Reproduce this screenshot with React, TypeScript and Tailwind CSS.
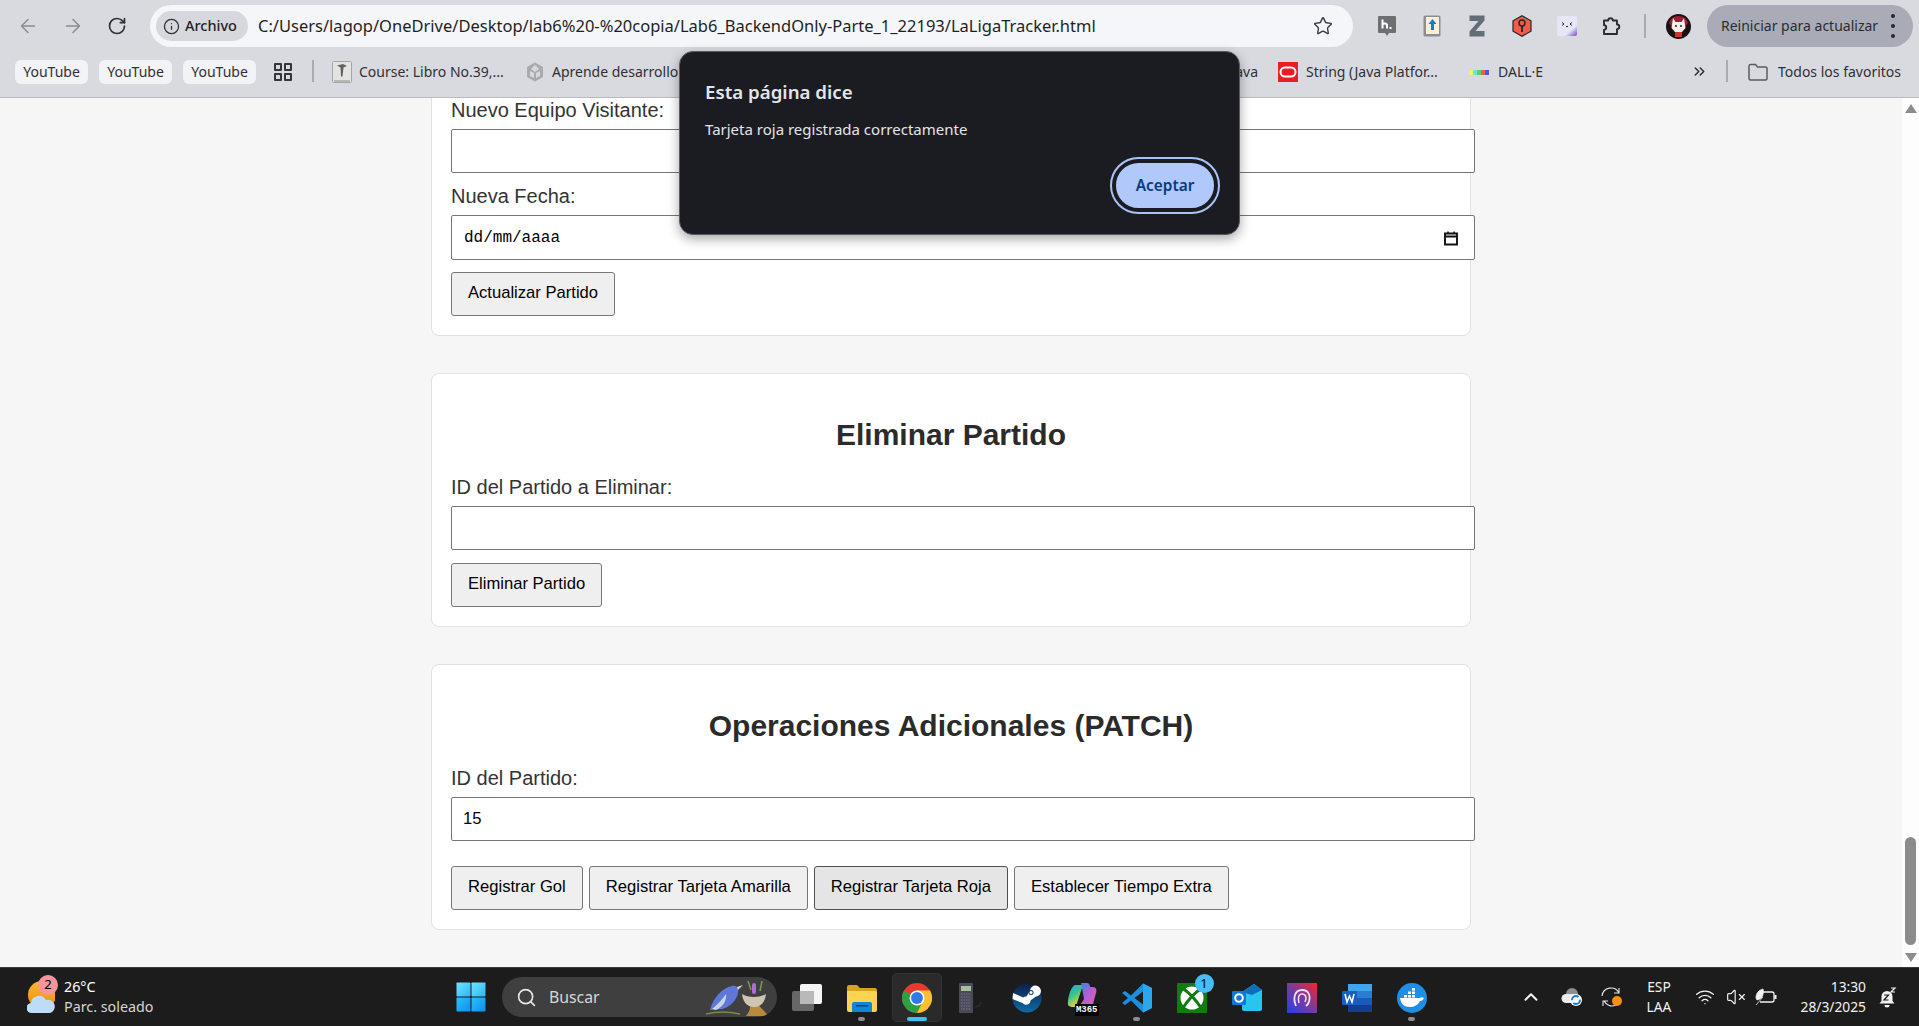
import { ArrowLeft, ArrowRight, RotateCw, Info, Star, ChevronsRight, Search, ChevronUp, VolumeX, Wifi } from "lucide-react";

const URL_TEXT = "C:/Users/lagop/OneDrive/Desktop/lab6%20-%20copia/Lab6_BackendOnly-Parte_1_22193/LaLigaTracker.html";

function Square() {
  return <div className="w-[8px] h-[8px] border-2 border-[#34353a] rounded-[1px]" />;
}

function ExtH() {
  return (
    <svg width="20" height="22" viewBox="0 0 20 22">
      <path d="M2 1h16a1 1 0 0 1 1 1v15a1 1 0 0 1-1 1h-6l-2 3-2-3H2a1 1 0 0 1-1-1V2a1 1 0 0 1 1-1z" fill="#6e6f73" />
      <path d="M5.500 4.500v9M5.500 9.500c1-1.500 4.500-1.500 4.500 1v3" stroke="#fff" strokeWidth="2" fill="none" />
      <rect x="12.500" y="12" width="2" height="2" fill="#fff" />
    </svg>
  );
}

function ExtBook() {
  return (
    <svg width="18" height="22" viewBox="0 0 18 22">
      <rect x="0.500" y="0.500" width="17" height="21" rx="1.500" fill="#8a8d92" />
      <rect x="3" y="2" width="13" height="17" fill="#f7efd9" />
      <path d="M1.500 3h1M1.500 6h1M1.500 9h1M1.500 12h1M1.500 15h1" stroke="#c08a70" strokeWidth="1" />
      <path d="M9.500 4l4 5h-2.500v6h-3v-6H5.500z" fill="#1679c9" />
    </svg>
  );
}

function ExtZ() {
  return (
    <svg width="16" height="22" viewBox="0 0 16 22">
      <path d="M0.500 0.500h15v5L6.500 16h9v5.500H0.500v-5L9.500 6h-9z" fill="#626d78" />
    </svg>
  );
}

function ExtHex() {
  return (
    <svg width="20" height="22" viewBox="0 0 20 22">
      <path d="M10 0.800L19 5.800v10.400L10 21.200 1 16.200V5.800z" fill="#f25a4b" stroke="#26262a" strokeWidth="1.200" />
      <circle cx="10" cy="8" r="3" fill="none" stroke="#26262a" strokeWidth="1.500" />
      <path d="M10 11v6" stroke="#26262a" strokeWidth="1.800" />
    </svg>
  );
}

function ExtFace() {
  return (
    <svg width="20" height="20" viewBox="0 0 20 20">
      <defs>
        <linearGradient id="faceBg" x1="0.300" y1="0.200" x2="1" y2="1">
          <stop offset="0.600" stopColor="#e5e7f7" />
          <stop offset="1" stopColor="#7a3fd0" />
        </linearGradient>
      </defs>
      <rect width="20" height="20" rx="2" fill="url(#faceBg)" />
      <path d="M5 6.500l2 1.500-2 1.500M15 6.500l-2 1.500 2 1.500" stroke="#2d2d3a" strokeWidth="1" fill="none" />
      <path d="M9 10.500h2" stroke="#2d2d3a" strokeWidth="1" />
    </svg>
  );
}

function PuzzleIcon() {
  return (
    <svg width="20" height="20" viewBox="0 0 20 20">
      <path d="M2 4.500h4.200a2.300 2.300 0 0 1 4.600 0H15v4a2.300 2.300 0 0 1 0 4.600V18H2v-4.300a2.200 2.200 0 0 0 0-4.400z" fill="none" stroke="#2b2c30" strokeWidth="1.900" strokeLinejoin="round" />
    </svg>
  );
}

function Avatar() {
  return (
    <svg width="25" height="25" viewBox="0 0 25 25">
      <circle cx="12.500" cy="12.500" r="12.500" fill="#1c1014" />
      <path d="M3 9a10 10 0 0 1 19 0l-3 4H6z" fill="#a01c30" />
      <path d="M7 4l2.500 4h6L18 4l1.500 10-3.500 4H9l-3.500-4z" fill="#f6eeec" />
      <circle cx="10" cy="12" r="1" fill="#222" />
      <circle cx="15" cy="12" r="1" fill="#222" />
      <rect x="9" y="18" width="7" height="5" fill="#d3322c" />
    </svg>
  );
}

function OracleIcon() {
  return (
    <svg width="20" height="20" viewBox="0 0 20 20">
      <rect width="20" height="20" fill="#ec1c24" />
      <rect x="2.500" y="5.500" width="15" height="9" rx="4.500" fill="none" stroke="#fff" strokeWidth="2" />
    </svg>
  );
}

function DalleIcon() {
  return (
    <div className="flex w-[20px] h-[5px]">
      <div className="flex-1 bg-[#f6f06a]" />
      <div className="flex-1 bg-[#6fe3e0]" />
      <div className="flex-1 bg-[#66cc66]" />
      <div className="flex-1 bg-[#e26060]" />
      <div className="flex-1 bg-[#4f56d8]" />
    </div>
  );
}

function CourseIcon() {
  return (
    <svg width="20" height="22" viewBox="0 0 20 22">
      <rect x="0.500" y="0.500" width="19" height="21" rx="1" fill="#e4e4e2" stroke="#a5a5a5" />
      <path d="M5 4.500l6-1.500 4 2-3.500 1.500-1 9h-1.500l-.5-9z" fill="#66615b" />
      <path d="M2 20h16" stroke="#8b8b88" strokeWidth="1" />
    </svg>
  );
}

function UnityIcon() {
  return (
    <svg width="20" height="20" viewBox="0 0 20 20">
      <path d="M10 0.500l8 4.500v10l-8 4.500-8-4.500V5z" fill="#a9aaae" />
      <path d="M10 3l-4 4 4 3 4-3zM5 9v5l4 2v-5zM15 9v5l-4 2v-5z" fill="#d8d9df" />
    </svg>
  );
}

function WindowsLogo() {
  return (
    <svg width="30" height="30" viewBox="0 0 30 30">
      <defs>
        <linearGradient id="winTop" x1="0" y1="0" x2="1" y2="1">
          <stop offset="0" stopColor="#6fe6ff" />
          <stop offset="1" stopColor="#2cb5f2" />
        </linearGradient>
        <linearGradient id="winBottom" x1="0" y1="0" x2="1" y2="1">
          <stop offset="0" stopColor="#2cc0f5" />
          <stop offset="1" stopColor="#0f8ef0" />
        </linearGradient>
      </defs>
      <rect x="0.500" y="0.500" width="14" height="14" rx="0.800" fill="url(#winTop)" />
      <rect x="15.500" y="0.500" width="14" height="14" rx="0.800" fill="url(#winTop)" />
      <rect x="0.500" y="15.500" width="14" height="14" rx="0.800" fill="url(#winBottom)" />
      <rect x="15.500" y="15.500" width="14" height="14" rx="0.800" fill="url(#winBottom)" />
    </svg>
  );
}

function WeatherIcon() {
  return (
    <svg width="28" height="34" viewBox="0 0 28 34">
      <defs>
        <linearGradient id="sunFill" x1="0" y1="0" x2="0" y2="1">
          <stop offset="0" stopColor="#f9b92c" />
          <stop offset="1" stopColor="#ea8a1c" />
        </linearGradient>
      </defs>
      <circle cx="15" cy="15" r="14" fill="url(#sunFill)" />
      <path d="M5 33a5 5 0 0 1-1-10 8 8 0 0 1 15-3 6.500 6.500 0 0 1 4 13z" fill="#bcdcf7" />
    </svg>
  );
}

function BirdArt() {
  return (
    <svg width="66" height="38" viewBox="0 0 66 38">
      <path d="M42 38c4-5 5-8 3-14h8c3 6 8 9 11 14z" fill="#b98a3c" />
      <path d="M38 16c6 4 18 4 24 0-1 9-6 13-12 13s-11-4-12-13z" fill="#cfc6b2" />
      <rect x="48" y="5" width="4" height="11" rx="2" fill="#b36ad8" />
      <path d="M44 3l3 9M58 3l-2 10" stroke="#7b9a4a" strokeWidth="1.500" />
      <path d="M6 32c3-12 12-22 22-24 5-1 7 3 6 7-1 7-9 15-16 16z" fill="#5f78d8" />
      <path d="M8 31c5-4 10-9 14-15 1 6-3 13-10 16z" fill="#c6d4ee" />
      <path d="M33 9l6-2-5 5z" fill="#d9d9d9" />
      <path d="M2 36c8-2 20-3 34 0" stroke="#7b8a4a" strokeWidth="1.500" fill="none" />
    </svg>
  );
}

function TaskView() {
  return (
    <svg width="30" height="28" viewBox="0 0 30 28">
      <rect x="8" y="0" width="22" height="20" rx="2" fill="#f5f5f5" />
      <rect x="0" y="7" width="22" height="20" rx="2" fill="#707070" opacity="0.9" />
      <rect x="8" y="7" width="14" height="13" fill="#b9b9b9" />
    </svg>
  );
}

function FolderIcon() {
  return (
    <svg width="30" height="27" viewBox="0 0 30 27">
      <path d="M0 2a2 2 0 0 1 2-2h8l3 3h15a2 2 0 0 1 2 2v3H0z" fill="#d9a21d" />
      <path d="M0 6h28a2 2 0 0 1 2 2v17a2 2 0 0 1-2 2H2a2 2 0 0 1-2-2z" fill="#fbd452" />
      <path d="M5 27v-8a2 2 0 0 1 2-2h16a2 2 0 0 1 2 2v8z" fill="#0f86d6" />
      <rect x="9" y="20" width="12" height="1.500" fill="#063f73" />
    </svg>
  );
}

function ChromeLogo() {
  return (
    <svg width="30" height="30" viewBox="0 0 48 48">
      <circle cx="24" cy="24" r="24" fill="#e33b2e" />
      <path d="M24 24L3.200 12A24 24 0 0 0 24 48l12-24z" fill="#2f9e44" />
      <path d="M24 12h20.800A24 24 0 0 1 24 48l12-24z" fill="#fbc02d" />
      <circle cx="24" cy="24" r="12" fill="#fff" />
      <circle cx="24" cy="24" r="9.500" fill="#2f78e8" />
    </svg>
  );
}

function Calculator() {
  return (
    <svg width="30" height="30" viewBox="0 0 30 30">
      <rect x="2" y="0" width="14" height="30" rx="1" fill="#4b4a59" />
      <rect x="4" y="3" width="10" height="5" fill="#a9bd9c" />
      <path d="M4 11h10M4 14h10M4 17h10M4 20h10M4 23h10M4 26h10" stroke="#77768a" strokeWidth="1.200" strokeDasharray="1.500 1" />
      <path d="M18 24c3 0 5-2 6-5" stroke="#2c2c2c" strokeWidth="1.500" fill="none" />
    </svg>
  );
}

function SteamLogo() {
  return (
    <svg width="30" height="30" viewBox="0 0 30 30">
      <defs>
        <linearGradient id="steamBg" x1="0" y1="0" x2="0" y2="1">
          <stop offset="0" stopColor="#0e1f47" />
          <stop offset="1" stopColor="#0f6aa8" />
        </linearGradient>
      </defs>
      <circle cx="15" cy="15" r="14.500" fill="url(#steamBg)" />
      <path d="M0.500 16l10 4a4.500 4.500 0 0 0 8-2.500l5.500-4a5.500 5.500 0 1 0-6-6l-3.500 6a4.500 4.500 0 0 0-3.500 1L1 10z" fill="#fff" />
      <circle cx="19" cy="9.500" r="2.500" fill="#1a3a6b" />
      <circle cx="19" cy="9.500" r="1.500" fill="#fff" />
    </svg>
  );
}

function CopilotIcon() {
  return (
    <div className="relative w-[30px] h-[32px]">
      <svg width="30" height="28" viewBox="0 0 30 28">
        <defs>
          <linearGradient id="copLeft" x1="0" y1="0" x2="0.500" y2="1">
            <stop offset="0" stopColor="#2f9fe8" />
            <stop offset="0.500" stopColor="#37c48b" />
            <stop offset="1" stopColor="#f4d430" />
          </linearGradient>
          <linearGradient id="copRight" x1="0" y1="0" x2="1" y2="1">
            <stop offset="0" stopColor="#1f8be0" />
            <stop offset="0.500" stopColor="#b45fd8" />
            <stop offset="1" stopColor="#ef5aa0" />
          </linearGradient>
        </defs>
        <path d="M8 3h8L9 24c-1 2-7 1-8-1-1-6 3-19 7-20z" fill="url(#copLeft)" />
        <path d="M14 1h6c2 0 3 2 3 4h3c3 0 4 3 3 6l-3 11c-1 2-3 3-5 3h-9l5-8-3-16z" fill="url(#copRight)" />
      </svg>
      <span className="absolute right-[-2px] bottom-[-2px] bg-black text-white text-[9px] leading-[12px] font-bold px-[1px] font-['Liberation_Mono',monospace]">M365</span>
    </div>
  );
}

function VsCode() {
  return (
    <svg width="30" height="30" viewBox="0 0 30 30">
      <path d="M21 0.500L30 5v20l-9 4.500-12-12-6 4.500-3-2 6-5-6-5 3-2 6 4.500z" fill="#1b8fdc" />
      <path d="M21 0.500L30 5v20l-9 4.500z" fill="#2ba7ee" />
      <path d="M21 8.500v13L12.500 15z" fill="#1c1c1c" />
    </svg>
  );
}

function XboxIcon() {
  return (
    <svg width="30" height="30" viewBox="0 0 30 30">
      <rect width="30" height="30" rx="1" fill="#107c10" />
      <circle cx="15" cy="15" r="11.500" fill="#fff" />
      <path d="M6 5.500C11 9 19 17 24.500 25.500M24 5.500C19 9 11 17 5.500 25.500" fill="none" stroke="#107c10" strokeWidth="3" />
    </svg>
  );
}

function OutlookIcon() {
  return (
    <svg width="30" height="28" viewBox="0 0 30 28">
      <path d="M10 8l12-8 8 6v19a2 2 0 0 1-2 2H12a2 2 0 0 1-2-2z" fill="#29c4ef" />
      <path d="M10 8l12-8 8 6-10 5z" fill="#0f6dbb" />
      <rect x="0" y="7" width="14" height="14" rx="1" fill="#0f78d4" />
      <circle cx="7" cy="14" r="3.800" fill="none" stroke="#fff" strokeWidth="2" />
    </svg>
  );
}

function PurpleApp() {
  return (
    <svg width="30" height="30" viewBox="0 0 30 30">
      <defs>
        <linearGradient id="purpleBg" x1="0" y1="1" x2="1" y2="0">
          <stop offset="0" stopColor="#1f40f0" />
          <stop offset="0.500" stopColor="#7a3b9c" />
          <stop offset="1" stopColor="#f8242c" />
        </linearGradient>
      </defs>
      <rect width="30" height="30" fill="url(#purpleBg)" />
      <path d="M9 23c-3-7-2-16 6-16s9 8 6 14l-2 2" fill="none" stroke="#f0e2f2" strokeWidth="1.800" />
      <path d="M12 20c-1-4-1-9 3-9s5 4 3 8" fill="none" stroke="#f0e2f2" strokeWidth="1.500" />
    </svg>
  );
}

function WordIcon() {
  return (
    <svg width="30" height="28" viewBox="0 0 30 28">
      <rect x="6" y="0" width="24" height="7" fill="#41a5ee" />
      <rect x="6" y="7" width="24" height="7" fill="#2b7cd3" />
      <rect x="6" y="14" width="24" height="7" fill="#185abd" />
      <rect x="6" y="21" width="24" height="7" fill="#103f91" />
      <rect x="0" y="7" width="15" height="14" rx="1" fill="#1a5fc0" />
      <path d="M3 10l2 8 2.500-6 2.500 6 2-8" fill="none" stroke="#fff" strokeWidth="1.500" />
    </svg>
  );
}

function DockerIcon() {
  return (
    <svg width="30" height="30" viewBox="0 0 30 30">
      <circle cx="15" cy="15" r="15" fill="#1d8fe6" />
      <path d="M3 15h20c1-1 2-1 4 0-1 2-2 3-4 3-2 4-6 6-10 6-6 0-9-3-10-9z" fill="#fff" />
      <path d="M7 12h3v2.500H7zM11 12h3v2.500h-3zM15 12h3v2.500h-3zM11 8.500h3V11h-3zM15 8.500h3V11h-3zM15 5h3v2.500h-3z" fill="#fff" />
    </svg>
  );
}

function CloudSync() {
  return (
    <svg width="22" height="20" viewBox="0 0 22 20">
      <circle cx="11" cy="7" r="6" fill="#8e8e8e" />
      <path d="M5 16a4.500 4.500 0 0 1 0-9h9v9z" fill="#ececec" />
      <circle cx="15" cy="13" r="6" fill="#fff" />
      <circle cx="15" cy="13" r="4" fill="none" stroke="#1b7fd0" strokeWidth="2" strokeDasharray="9 3" />
    </svg>
  );
}

function SyncDot() {
  return (
    <svg width="22" height="22" viewBox="0 0 22 22">
      <path d="M1 10a9 9 0 0 1 17-3M18 2v5h-5M15 19a9 9 0 0 1-12-4M2 20v-5h5" fill="none" stroke="#e6e6e6" strokeWidth="1.100" />
      <circle cx="16" cy="15" r="5" fill="#f7910f" />
    </svg>
  );
}

function BatteryLeaf() {
  return (
    <svg width="22" height="18" viewBox="0 0 22 18">
      <path d="M7 4h10a2 2 0 0 1 2 2v6a2 2 0 0 1-2 2H5" fill="none" stroke="#f2f2f2" strokeWidth="1.300" />
      <rect x="19.500" y="7" width="2" height="4" fill="#f2f2f2" />
      <path d="M1 17L8 9M1 10c0-5 3-8 7-9 1 4 0 10-6 11z" fill="#f2f2f2" stroke="#f2f2f2" strokeWidth="0.800" />
    </svg>
  );
}

function BellSnooze() {
  return (
    <svg width="18" height="21" viewBox="0 0 18 21">
      <path d="M8 4a5.500 5.500 0 0 1 5.500 5.500V14l2 2.500H0.500l2-2.500V9.500A5.500 5.500 0 0 1 8 4z" fill="#f2f2f2" />
      <path d="M5.500 18h5a2.500 2.500 0 0 1-5 0z" fill="#f2f2f2" />
      <path d="M5 8h4.500L5 13h4.500" fill="none" stroke="#1c1c1c" strokeWidth="1.200" />
      <path d="M12 1h4l-4 4h4" fill="none" stroke="#f2f2f2" strokeWidth="1.200" />
    </svg>
  );
}

function ExtSlot({ children }: { children: React.ReactNode }) {
  return <div className="w-[45px] h-[42px] flex items-center justify-center shrink-0">{children}</div>;
}

function BrowserChrome() {
  return (
    <div className="shrink-0 bg-[#d9dae0] border-b border-[#b9babd] text-[#2f3034]">
      {/* Toolbar */}
      <div className="h-[52px] flex items-start pt-[5px]">
        <div className="w-[150px] h-[42px] flex items-center shrink-0 pl-[17px] gap-[23px]">
          <ArrowLeft className="w-[22px] h-[22px] text-[#8a8b90]" strokeWidth={1.6} />
          <ArrowRight className="w-[22px] h-[22px] text-[#8a8b90]" strokeWidth={1.6} />
          <RotateCw className="w-[20px] h-[20px] text-[#2f3034]" strokeWidth={2} />
        </div>
        <div className="w-[1203px] h-[42px] rounded-full bg-[#f4f6fa] flex items-center pl-[6px] pr-[20px] shrink-0">
          <div className="h-[30px] w-[92px] rounded-full bg-[#d6d8de] flex items-center pl-[7px] gap-[5px] shrink-0">
            <Info className="w-[17px] h-[17px]" strokeWidth={1.8} />
            <span className="text-[14.500px] font-medium text-[#1f1f22]">Archivo</span>
          </div>
          <span className="ml-[10px] pt-[1px] text-[16.500px] text-[#1f1f22] whitespace-nowrap">{URL_TEXT}</span>
          <Star className="w-[20px] h-[20px] ml-auto text-[#3b3c40]" strokeWidth={1.7} />
        </div>
        <div className="ml-[11px] flex items-center h-[42px]">
          <ExtSlot><ExtH /></ExtSlot>
          <ExtSlot><ExtBook /></ExtSlot>
          <ExtSlot><ExtZ /></ExtSlot>
          <ExtSlot><ExtHex /></ExtSlot>
          <ExtSlot><ExtFace /></ExtSlot>
          <ExtSlot><PuzzleIcon /></ExtSlot>
          <div className="w-[2px] h-[24px] bg-[#a9abb2] mx-[10px]" />
          <ExtSlot><Avatar /></ExtSlot>
        </div>
        <div className="ml-[6px] w-[206px] h-[42px] rounded-full bg-[#a9acb6] flex items-center pl-[14px] shrink-0">
          <span className="text-[14px] pb-[1px] text-[#2b2c30] whitespace-nowrap">Reiniciar para actualizar</span>
          <div className="ml-[13px] flex flex-col gap-[6px]">
            <div className="w-[4px] h-[4px] rounded-full bg-[#26272b]" />
            <div className="w-[4px] h-[4px] rounded-full bg-[#26272b]" />
            <div className="w-[4px] h-[4px] rounded-full bg-[#26272b]" />
          </div>
        </div>
      </div>
      {/* Bookmarks */}
      <div className="h-[45px] flex items-start pt-[8px] pl-[15px] text-[14px] whitespace-nowrap">
        <div className="flex gap-[11px]">
          <div className="w-[73px] h-[24px] pb-[2px] rounded-[6px] bg-[#f2f3f6] flex items-center justify-center">YouTube</div>
          <div className="w-[73px] h-[24px] pb-[2px] rounded-[6px] bg-[#f2f3f6] flex items-center justify-center">YouTube</div>
          <div className="w-[73px] h-[24px] pb-[2px] rounded-[6px] bg-[#f2f3f6] flex items-center justify-center">YouTube</div>
        </div>
        <div className="ml-[18px] h-[24px] w-[18px] grid grid-cols-2 gap-[2px] content-center">
          <Square />
          <Square />
          <Square />
          <Square />
        </div>
        <div className="ml-[20px] w-[2px] h-[22px] bg-[#a9abb2]" />
        <div className="ml-[18px] h-[24px] flex items-center gap-[7px] w-[190px]">
          <CourseIcon />
          <span className="pb-[2px]">Course: Libro No.39,...</span>
        </div>
        <div className="h-[24px] flex items-center gap-[7px] ml-[3px]">
          <UnityIcon />
          <span className="w-[160px] pb-[2px]">Aprende desarrollo</span>
        </div>
        <div className="h-[24px] flex items-center justify-end w-[546px]">
          <span className="pb-[2px]">Java</span>
        </div>
        <div className="ml-[20px] h-[24px] flex items-center gap-[8px] w-[191px]">
          <OracleIcon />
          <span className="pb-[2px]">String (Java Platfor...</span>
        </div>
        <div className="h-[24px] flex items-center gap-[9px] w-[190px]">
          <DalleIcon />
          <span className="pb-[2px]">DALL·E</span>
        </div>
        <ChevronsRight className="w-[17px] h-[17px] mt-[3px] ml-[32px] text-[#2f3034]" strokeWidth={2.2} />
        <div className="ml-[18px] w-[2px] h-[22px] bg-[#a9abb2]" />
        <svg className="ml-[20px] mt-[3px]" width="20" height="18" viewBox="0 0 20 18">
          <path d="M1 3a1.500 1.500 0 0 1 1.500-1.500h5l2 2.500h8A1.500 1.500 0 0 1 19 5.500v10a1.500 1.500 0 0 1-1.500 1.500h-15A1.500 1.500 0 0 1 1 15.500z" fill="none" stroke="#5b5c60" strokeWidth="1.500" />
        </svg>
        <span className="ml-[10px] h-[24px] pb-[2px] flex items-center">Todos los favoritos</span>
      </div>
    </div>
  );
}

function FormButton({ children, active }: { children: React.ReactNode; active?: boolean }) {
  return (
    <button
      className={`h-[44px] px-[16px] pb-[1px] rounded-[3px] border text-[16.600px] text-black whitespace-nowrap ${
        active ? "bg-[#e5e5e5] border-[#4f4f4f]" : "bg-[#efefef] border-[#767676]"
      }`}
    >
      {children}
    </button>
  );
}

function Card({ title, children }: { title?: string; children: React.ReactNode }) {
  return (
    <section className="w-[1040px] shrink-0 bg-white border border-[#e2e2e2] rounded-[8px] pl-[19px] pt-[44px] pb-[19px]">
      {title && <h2 className="h-[32px] mr-[19px] mb-[26px] flex items-center justify-center text-[30px] font-bold text-[#2b2b2b]">{title}</h2>}
      {children}
    </section>
  );
}

function FieldLabel({ children }: { children: React.ReactNode }) {
  return <label className="block h-[23px] mb-[7px] leading-[23px] text-[20px] text-[#333]">{children}</label>;
}

function TextField({ value }: { value?: string }) {
  return (
    <input
      readOnly
      defaultValue={value}
      className="block w-[1024px] h-[44px] px-[11px] bg-white border border-[#767676] rounded-[2px] text-[16.600px] text-black outline-none"
    />
  );
}

function Page() {
  return (
    <div className="flex-1 min-h-0 flex overflow-hidden bg-[#f6f6f6]">
      <main className="flex-1 flex flex-col items-center justify-end gap-[37px] pb-[37px] overflow-hidden">
        <Card>
          <FieldLabel>Nuevo Equipo Visitante:</FieldLabel>
          <TextField />
          <div className="mt-[12px]">
            <FieldLabel>Nueva Fecha:</FieldLabel>
          </div>
          <div className="w-[1024px] h-[45px] pl-[12px] pr-[15px] bg-white border border-[#767676] rounded-[2px] flex items-center justify-between">
            <span className="text-[16px] text-black font-['Liberation_Mono',monospace]">dd/mm/aaaa</span>
            <svg width="16" height="16" viewBox="0 0 16 16">
              <path d="M2 3.500h12v11H2zM2 6.500h12" fill="none" stroke="#111" strokeWidth="1.900" />
              <path d="M5 1.500v2M11 1.500v2" stroke="#111" strokeWidth="1.500" />
            </svg>
          </div>
          <div className="mt-[12px]">
            <FormButton>Actualizar Partido</FormButton>
          </div>
        </Card>

        <Card title="Eliminar Partido">
          <FieldLabel>ID del Partido a Eliminar:</FieldLabel>
          <TextField />
          <div className="mt-[13px]">
            <FormButton>Eliminar Partido</FormButton>
          </div>
        </Card>

        <Card title="Operaciones Adicionales (PATCH)">
          <FieldLabel>ID del Partido:</FieldLabel>
          <TextField value="15" />
          <div className="mt-[25px] flex gap-[6px]">
            <FormButton>Registrar Gol</FormButton>
            <FormButton>Registrar Tarjeta Amarilla</FormButton>
            <FormButton active>Registrar Tarjeta Roja</FormButton>
            <FormButton>Establecer Tiempo Extra</FormButton>
          </div>
        </Card>
      </main>

      {/* Scrollbar */}
      <div className="w-[17px] shrink-0 bg-[#fdfdfd] flex flex-col items-center pt-[6px] pb-[5px]">
        <div className="w-0 h-0 border-x-[6px] border-x-transparent border-b-[9px] border-b-[#8c8c8c]" />
        <div className="flex-1 w-full flex flex-col justify-end items-center pb-[8px]">
          <div className="w-[11px] h-[108px] rounded-full bg-[#8c8c8c]" />
        </div>
        <div className="w-0 h-0 border-x-[6px] border-x-transparent border-t-[9px] border-t-[#8c8c8c]" />
      </div>
    </div>
  );
}

function TaskSlot({ children, dot, active }: { children: React.ReactNode; dot?: boolean; active?: boolean }) {
  return (
    <div className="relative w-[55px] h-[54px] flex items-center justify-center shrink-0">
      {active && <div className="absolute left-[2.500px] top-[1px] w-[50px] h-[49px] rounded-[5px] bg-[#2a2a2a] border border-[#333]" />}
      <div className="relative -top-[1px]">{children}</div>
      {dot && <div className="absolute bottom-[5px] left-[24px] w-[7px] h-[4px] rounded-full bg-[#8d8d8d]" />}
      {active && <div className="absolute bottom-[5px] left-[18px] w-[20px] h-[4px] rounded-full bg-[#47bdf5]" />}
    </div>
  );
}

function Taskbar() {
  return (
    <footer className="h-[59px] shrink-0 bg-[#1c1c1c] border-t border-[#3a3a3a] flex items-start text-white relative">
      {/* Weather */}
      <div className="w-[443px] shrink-0 h-[58px] pl-[27px] flex items-center gap-[9px] relative">
        <WeatherIcon />
        <div className="absolute left-[38px] top-[7px] w-[20px] h-[20px] rounded-full bg-[#f8949b] text-black text-[13px] flex items-center justify-center">2</div>
        <div className="text-[14.300px] leading-[20px] whitespace-nowrap">
          <div>26°C</div>
          <div className="text-[#d5d5d5]">Parc. soleado</div>
        </div>
      </div>
      <div className="w-[55px] h-[58px] flex items-center justify-center shrink-0">
        <WindowsLogo />
      </div>
      <div className="mt-[9px] ml-[4px] w-[275px] h-[40px] rounded-full bg-[#3f3f3f] flex items-center pl-[14px] shrink-0 relative overflow-hidden">
        <Search className="w-[21px] h-[21px] text-[#e8e8e8]" strokeWidth={1.8} />
        <span className="ml-[12px] pt-[2px] text-[15.800px] text-[#d8d8d8]">Buscar</span>
        <div className="absolute right-[7px] top-[1px]"><BirdArt /></div>
      </div>
      <div className="flex ml-[2px] mt-[4px]">
        <TaskSlot><TaskView /></TaskSlot>
        <TaskSlot dot><FolderIcon /></TaskSlot>
        <TaskSlot active><ChromeLogo /></TaskSlot>
        <TaskSlot><Calculator /></TaskSlot>
        <TaskSlot><SteamLogo /></TaskSlot>
        <TaskSlot><CopilotIcon /></TaskSlot>
        <TaskSlot dot><VsCode /></TaskSlot>
        <TaskSlot>
          <XboxIcon />
          <div className="absolute right-[-7px] top-[-9px] w-[19px] h-[19px] rounded-full bg-[#47bdf5] text-black text-[13px] flex items-center justify-center">1</div>
        </TaskSlot>
        <TaskSlot><OutlookIcon /></TaskSlot>
        <TaskSlot><PurpleApp /></TaskSlot>
        <TaskSlot><WordIcon /></TaskSlot>
        <TaskSlot dot><DockerIcon /></TaskSlot>
      </div>
      {/* Tray */}
      <div className="flex items-center h-[58px] ml-[81px] text-[#f2f2f2]">
        <ChevronUp className="w-[22px] h-[22px]" strokeWidth={2.2} />
        <div className="ml-[19px]"><CloudSync /></div>
        <div className="ml-[18px]"><SyncDot /></div>
        <div className="ml-[13px] w-[46px] text-center text-[13.800px] leading-[20px]">
          <div>ESP</div>
          <div>LAA</div>
        </div>
        <Wifi className="ml-[13px] w-[20px] h-[20px]" strokeWidth={1.6} />
        <VolumeX className="ml-[11px] w-[20px] h-[20px]" strokeWidth={1.4} />
        <div className="ml-[9px]"><BatteryLeaf /></div>
        <div className="ml-[11px] w-[78px] text-right text-[13.800px] leading-[20px] whitespace-nowrap">
          <div>13:30</div>
          <div>28/3/2025</div>
        </div>
        <div className="ml-[13px]"><BellSnooze /></div>
      </div>
    </footer>
  );
}

export default function App() {
  return (
    <div className="h-screen overflow-hidden relative flex flex-col font-['Noto_Sans',sans-serif]">
      <BrowserChrome />
      <div className="flex-1 min-h-0 flex flex-col font-['Liberation_Sans',sans-serif]">
        <Page />
      </div>
      <Taskbar />

      {/* Alert dialog */}
      <div className="absolute left-[679px] top-[51px] w-[561px] h-[184px] rounded-[14px] bg-[#1b1c21] border border-[#5a5b60] shadow-[0_4px_12px_rgba(0,0,0,0.35)] pl-[25px] pt-[27px] text-[#e4e5ea]">
        <h3 className="text-[18.700px] leading-[26px] font-semibold">Esta página dice</h3>
        <p className="mt-[13px] text-[15px] leading-[22px]">Tarjeta roja registrada correctamente</p>
        <div className="absolute right-[19px] bottom-[20px] rounded-full border-[2px] border-[#a9c3f5] p-[2px]">
          <div className="w-[102px] h-[49px] rounded-full bg-[#b0c9fa] border-[2px] border-[#1b1c21] flex items-center justify-center text-[15.400px] font-semibold text-[#0b3a80]">
            Aceptar
          </div>
        </div>
      </div>
    </div>
  );
}
